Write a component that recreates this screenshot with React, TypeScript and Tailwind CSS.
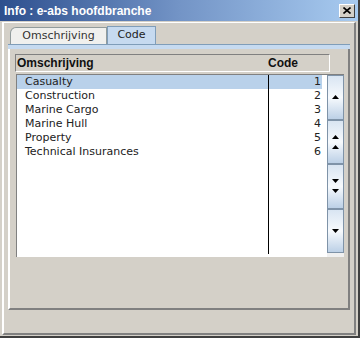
import React from 'react';

const rows = [
  { name: 'Casualty', code: 1 },
  { name: 'Construction', code: 2 },
  { name: 'Marine Cargo', code: 3 },
  { name: 'Marine Hull', code: 4 },
  { name: 'Property', code: 5 },
  { name: 'Technical Insurances', code: 6 },
];

function Arrow({ dir }: { dir: 'up' | 'down' }) {
  return (
    <svg width="7" height="4" viewBox="0 0 7 4" className="block">
      {dir === 'up' ? <path d="M3.5 0 L7 4 L0 4 Z" fill="#000" /> : <path d="M0 0 L7 0 L3.5 4 Z" fill="#000" />}
    </svg>
  );
}

function ScrollButton({ dir, double }: { dir: 'up' | 'down'; double?: boolean }) {
  return (
    <div className="flex-1 flex flex-col items-center justify-center gap-[6px] border border-[#7f93a8] bg-gradient-to-b from-[#d9e5f2] via-[#f7fafd] to-[#bcd0e6]">
      <Arrow dir={dir} />
      {double && <Arrow dir={dir} />}
    </div>
  );
}

export default function App() {
  return (
    <div className="w-[360px] h-[338px] bg-[#d4d0c8] flex flex-col border-r-2 border-b-2 border-[#404040] font-['DejaVu_Sans',sans-serif] text-[11px] text-[#222] overflow-hidden">
      {/* title bar */}
      <div className="h-[21px] shrink-0 flex items-center justify-between pl-[4px] pr-[3px] bg-gradient-to-r from-[#2d4f8e] via-[#7394c6] to-[#a8cbf0]">
        <span className="font-['Liberation_Sans',sans-serif] font-bold text-[12px] text-white leading-none">Info : e-abs hoofdbranche</span>
        <div className="w-[16px] h-[14px] bg-[#d4d0c8] border border-t-white border-l-white border-r-[#404040] border-b-[#404040] flex items-center justify-center">
          <svg width="8" height="7" viewBox="0 0 8 7">
            <path d="M0.5 0.5 L7.5 6.5 M7.5 0.5 L0.5 6.5" stroke="#000" strokeWidth="1.6" />
          </svg>
        </div>
      </div>

      {/* body frame */}
      <div className="flex-1 flex flex-col mx-[2px] mt-[1px] mb-[1px] border-l-2 border-t border-r-2 border-b-2 border-l-white border-t-white border-r-[#808080] border-b-[#808080] px-[4px] pt-0 pb-[23px]">
        {/* tabs */}
        <div className="flex items-end h-[21px] pl-[2px] shrink-0">
          <div className="h-[17px] w-[97px] flex items-center justify-center bg-[#f0f0ee] border border-b-0 border-[#919b9c] rounded-tl-[6px] text-[#333]">
            Omschrijving
          </div>
          <div className="h-[18px] w-[49px] flex items-center justify-center bg-[#c6daf0] border border-b-0 border-[#7f9db9] text-[#222]">
            Code
          </div>
        </div>
        <div className="h-[5px] shrink-0 bg-[#c6daf0] border-t border-[#7f9db9]" />

        {/* tab panel */}
        <div className="flex-1 flex flex-col border-l-2 border-l-white border-r-2 border-r-[#808080] border-b-2 border-b-[#808080] pl-[5px] pr-[6px] pt-[5px] pb-[51px]">
          {/* header */}
          <div className="h-[18px] w-[315px] shrink-0 flex items-center border-t border-l border-t-[#808080] border-l-[#808080] border-r border-b border-r-white border-b-white font-bold font-['Liberation_Sans',sans-serif] text-[12px] text-[#111]">
            <span className="w-[252px] pl-[1px]">Omschrijving</span>
            <span>Code</span>
          </div>

          {/* list */}
          <div className="mt-[2px] ml-[1px] flex-1 flex bg-white border-l border-t border-[#808080] w-[328px]">
            <div className="flex-1 flex flex-col pb-[3px]">
              <div className="flex-1 flex">
                <div className="w-[252px] border-r border-black">
                  {rows.map((r, i) => (
                    <div key={r.name} className={`h-[14px] leading-[14px] pl-[8px] ${i === 0 ? 'bg-[#b9d1ea]' : ''}`}>
                      {r.name}
                    </div>
                  ))}
                </div>
                <div className="w-[53px]">
                  {rows.map((r, i) => (
                    <div key={r.name} className={`h-[14px] leading-[14px] text-right pr-[1px] ${i === 0 ? 'bg-[#b9d1ea]' : ''}`}>
                      {r.code}
                    </div>
                  ))}
                </div>
              </div>
            </div>
            <div className="w-[17px] ml-[4px] flex flex-col pb-[4px] bg-[#f0f0f0]">
              <ScrollButton dir="up" />
              <ScrollButton dir="up" double />
              <ScrollButton dir="down" double />
              <ScrollButton dir="down" />
            </div>
          </div>
        </div>
      </div>
    </div>
  );
}
